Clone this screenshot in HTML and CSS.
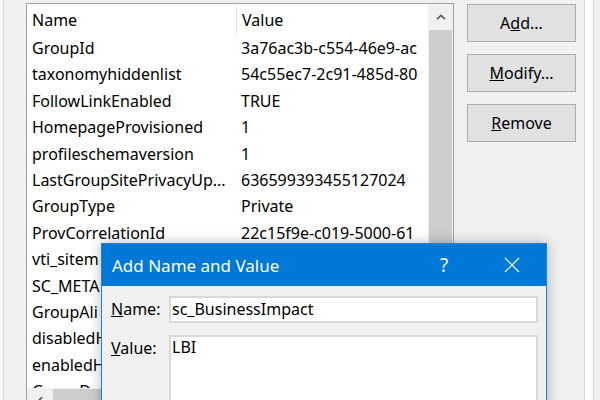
FILE: index.html
```html
<!DOCTYPE html>
<html>
<head>
<meta charset="utf-8">
<link rel="stylesheet" href="styles.css">
</head>
<body>
<div class="screen">
  <div class="edge-left"></div>
  <div class="list">
    <div class="list-body">
      <div class="grid">
        <div class="hdr"><span class="c1">Name</span><span class="c2">Value</span></div>
        <div class="row"><span class="c1">GroupId</span><span class="c2">3a76ac3b-c554-46e9-ac</span></div>
        <div class="row"><span class="c1">taxonomyhiddenlist</span><span class="c2">54c55ec7-2c91-485d-80</span></div>
        <div class="row"><span class="c1">FollowLinkEnabled</span><span class="c2">TRUE</span></div>
        <div class="row"><span class="c1">HomepageProvisioned</span><span class="c2">1</span></div>
        <div class="row"><span class="c1">profileschemaversion</span><span class="c2">1</span></div>
        <div class="row"><span class="c1">LastGroupSitePrivacyUp...</span><span class="c2">636599393455127024</span></div>
        <div class="row"><span class="c1">GroupType</span><span class="c2">Private</span></div>
        <div class="row"><span class="c1">ProvCorrelationId</span><span class="c2">22c15f9e-c019-5000-61</span></div>
        <div class="row"><span class="c1">vti_sitem</span><span class="c2"></span></div>
        <div class="row"><span class="c1">SC_META</span><span class="c2"></span></div>
        <div class="row"><span class="c1">GroupAli</span><span class="c2"></span></div>
        <div class="row"><span class="c1">disabledH</span><span class="c2"></span></div>
        <div class="row"><span class="c1">enabledH</span><span class="c2"></span></div>
        <div class="row"><span class="c1">GroupDo</span><span class="c2"></span></div>
      </div>
      <div class="vscroll">
        <div class="vbtn"><svg width="10" height="6" viewBox="0 0 10 6"><path d="M1 5.2 L5 1.4 L9 5.2" fill="none" stroke="#606060" stroke-width="1.8"/></svg></div>
        <div class="vthumb"></div>
      </div>
    </div>
    <div class="hscroll">
      <div class="hbtn"><svg width="6" height="10" viewBox="0 0 6 10"><path d="M5.2 1 L1.4 5 L5.2 9" fill="none" stroke="#606060" stroke-width="1.8"/></svg></div>
      <div class="hthumb"></div>
    </div>
  </div>
  <div class="buttons">
    <div class="btn">A<u>d</u>d...</div>
    <div class="btn"><u>M</u>odify...</div>
    <div class="btn"><u>R</u>emove</div>
  </div>
  <div class="edge-right"></div>

  <div class="dialog">
    <div class="titlebar">
      <span class="title">Add Name and Value</span>
      <span class="help">?</span>
      <span class="close"><svg width="16" height="16" viewBox="0 0 16 16"><path d="M1 1 L15 15 M15 1 L1 15" stroke="#fff" stroke-width="1.2"/></svg></span>
    </div>
    <div class="dbody">
      <div class="field">
        <span class="label"><u>N</u>ame:</span>
        <div class="input">sc_BusinessImpact</div>
      </div>
      <div class="field">
        <span class="label"><u>V</u>alue:</span>
        <div class="input area">LBI</div>
      </div>
    </div>
  </div>
</div>
</body>
</html>
```
FILE: styles.css
```css
html, body {
  margin: 0;
  padding: 0;
}
body {
  width: 600px;
  height: 400px;
  overflow: hidden;
  background: #f0f0f0;
  font-family: "Noto Sans", "Open Sans", sans-serif;
  font-size: 16px;
  color: #000;
}
.screen {
  position: relative;
  width: 600px;
  height: 400px;
  display: flex;
  align-items: flex-start;
  overflow: hidden;
}
.edge-left {
  width: 23px;
  height: 400px;
  flex: none;
  border-left: 3px solid #f8f8f8;
  box-shadow: inset 1px 0 0 #dcdcdc;
}
.list {
  flex: none;
  margin-top: 3px;
  width: 426px;
  border: 1px solid #a0a0a0;
  background: #fff;
}
.list-body {
  display: flex;
  height: 384px;
}
.grid {
  width: 401px;
  overflow: hidden;
  flex: none;
}
.hdr, .row {
  display: flex;
  white-space: nowrap;
}
.hdr {
  height: 31px;
  align-items: center;
}
.hdr .c1 {
  border-right: 1px solid #e5e5e5;
  height: 28px;
  line-height: 28px;
}
.row {
  height: 26.4px;
  line-height: 26.4px;
}
.c1 {
  width: 204px;
  padding-left: 5px;
  flex: none;
  overflow: hidden;
}
.c2 {
  padding-left: 5px;
  flex: none;
}
.vscroll {
  width: 25px;
  flex: none;
  background: #f0f0f0;
  display: flex;
  flex-direction: column;
}
.vbtn {
  height: 26px;
  display: flex;
  align-items: center;
  justify-content: center;
}
.vthumb {
  margin-left: 1px;
  width: 23px;
  height: 300px;
  background: #cdcdcd;
}
.hscroll {
  height: 25px;
  display: flex;
  background: #f0f0f0;
}
.hbtn {
  width: 26px;
  display: flex;
  align-items: center;
  justify-content: center;
}
.hthumb {
  margin-top: 1px;
  height: 23px;
  width: 200px;
  background: #cdcdcd;
}
.buttons {
  flex: none;
  margin-left: 13px;
  margin-top: 4px;
  display: flex;
  flex-direction: column;
  gap: 12px;
}
.btn {
  width: 107px;
  height: 36px;
  border: 1px solid #adadad;
  background: #e1e1e1;
  display: flex;
  align-items: center;
  justify-content: center;
}
.edge-right {
  flex: none;
  margin-left: 8px;
  width: 8px;
  height: 400px;
  background: #fff;
  border-left: 1px solid #d9d9d9;
  border-right: 1px solid #cfcfcf;
}
.dialog {
  position: absolute;
  left: 101px;
  top: 243px;
  width: 444px;
  height: 200px;
  border: 1px solid #1883d7;
  background: #f0f0f0;
  box-shadow: 0 0 12px rgba(0, 0, 0, 0.28);
}
.titlebar {
  height: 42px;
  background: #0078d7;
  color: #fff;
  display: flex;
  align-items: center;
  font-size: 17px;
}
.title {
  padding-left: 10px;
  flex: 1;
}
.help {
  font-size: 19px;
  width: 20px;
  text-align: center;
  margin-right: 50px;
}
.close {
  display: flex;
  margin-right: 26px;
}
.dbody {
  padding: 10px 8px 0 9px;
  display: flex;
  flex-direction: column;
  gap: 12px;
}
.field {
  display: flex;
  align-items: flex-start;
}
.label {
  width: 58px;
  flex: none;
  line-height: 27px;
}
.input {
  flex: 1;
  height: 23px;
  border: 2px solid #d9d9d9;
  background: #fff;
  padding-left: 1px;
  line-height: 23px;
}
.input.area {
  height: 80px;
  line-height: 20px;
  padding-top: 0;
}
```
